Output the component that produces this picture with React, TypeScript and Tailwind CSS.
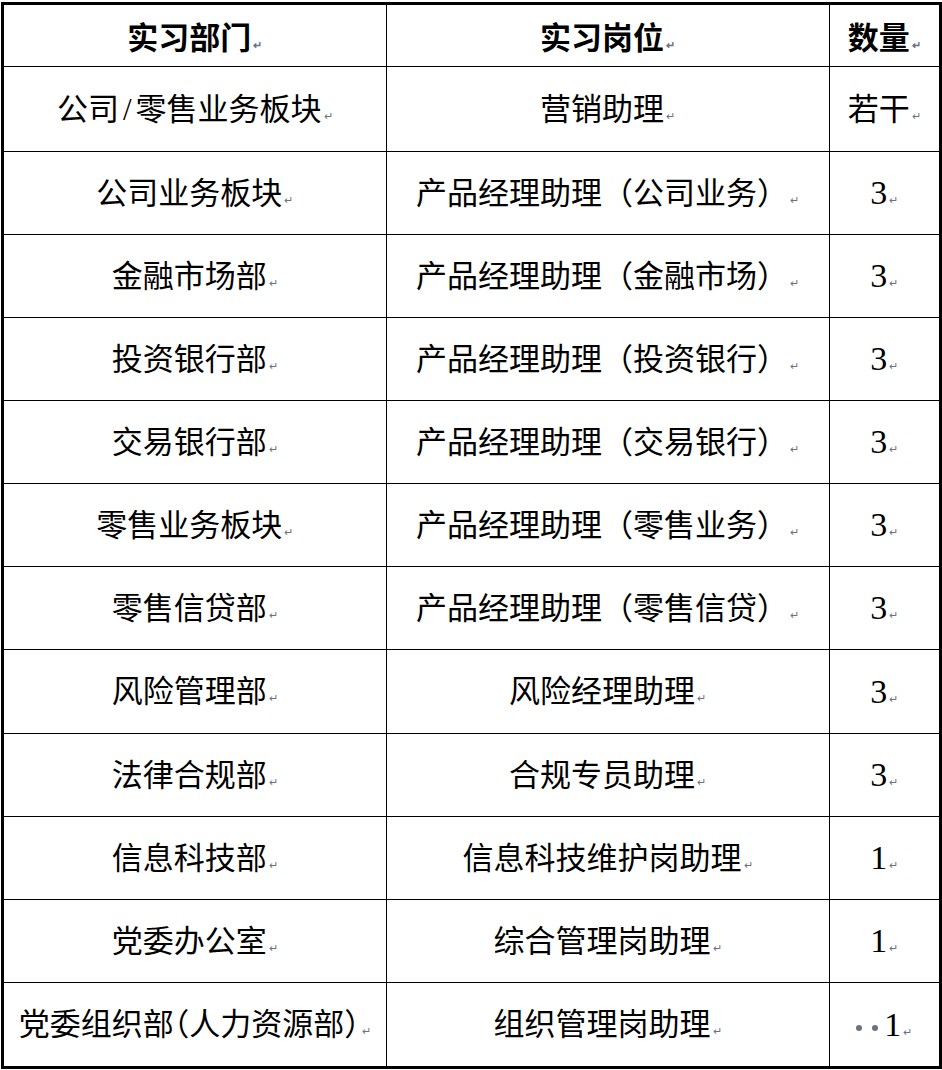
const rows: [string, string, string, number][] = [
  ['公司/零售业务板块', '营销助理', '若干', 85],
  ['公司业务板块', '产品经理助理（公司业务）', '3', 83],
  ['金融市场部', '产品经理助理（金融市场）', '3', 83],
  ['投资银行部', '产品经理助理（投资银行）', '3', 83],
  ['交易银行部', '产品经理助理（交易银行）', '3', 83],
  ['零售业务板块', '产品经理助理（零售业务）', '3', 83],
  ['零售信贷部', '产品经理助理（零售信贷）', '3', 83],
  ['风险管理部', '风险经理助理', '3', 84],
  ['法律合规部', '合规专员助理', '3', 83],
  ['信息科技部', '信息科技维护岗助理', '1', 83],
  ['党委办公室', '综合管理岗助理', '1', 83],
  ['党委组织部（人力资源部）', '组织管理岗助理', '1', 85],
];

function Mark() {
  return <span className="ml-[2px] text-[11px] leading-none text-gray-500 align-baseline">↵</span>;
}

// the slash in the first row is drawn wider, as the source font does
function Dept({ text }: { text: string }) {
  const parts = text.split('/');
  if (parts.length === 1) return <>{text}</>;
  return (
    <>
      {parts[0]}
      <span className="px-[4px]">/</span>
      {parts[1]}
    </>
  );
}

export default function App() {
  return (
    <div className="bg-white w-[942px] h-[1070px] pt-[2px] pl-[1px]">
      <table
        className="table-fixed border-collapse border-[3px] border-black text-black text-[31px] leading-none"
        style={{ fontFamily: '"Liberation Serif", "Noto Sans CJK SC", serif' }}
      >
        <colgroup>
          <col className="w-[384px]" />
          <col className="w-[444px]" />
          <col className="w-[112px]" />
        </colgroup>
        <thead>
          <tr className="h-[63px]">
            {['实习部门', '实习岗位', '数量'].map((h) => (
              <th key={h} className="border border-black text-center font-bold pt-[6px] p-0">
                {h}
                <Mark />
              </th>
            ))}
          </tr>
        </thead>
        <tbody>
          {rows.map((r, i) => {
            const last = i === rows.length - 1;
            const isNum = /^\d+$/.test(r[2]);
            return (
              <tr key={i} style={{ height: r[3] }}>
                <td
                  className={
                    last
                      ? 'border border-black text-center whitespace-nowrap p-0 [font-feature-settings:"halt"]'
                      : 'border border-black text-center whitespace-nowrap p-0'
                  }
                >
                  <Dept text={r[0]} />
                  <Mark />
                </td>
                <td className="border border-black text-center whitespace-nowrap p-0">
                  {r[1]}
                  <Mark />
                </td>
                <td
                  className={
                    isNum
                      ? 'border border-black text-center whitespace-nowrap p-0 text-[34px]'
                      : 'border border-black text-center whitespace-nowrap p-0'
                  }
                >
                  {last && (
                    <span className="inline-flex items-center gap-[10px] mr-[6px] align-middle">
                      <span className="inline-block w-[6px] h-[6px] rounded-full bg-gray-500" />
                      <span className="inline-block w-[6px] h-[6px] rounded-full bg-gray-500" />
                    </span>
                  )}
                  {r[2]}
                  <Mark />
                </td>
              </tr>
            );
          })}
        </tbody>
      </table>
    </div>
  );
}
